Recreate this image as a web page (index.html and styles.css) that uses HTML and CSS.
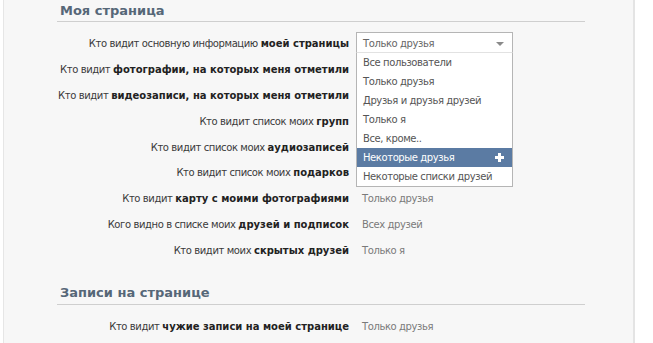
FILE: index.html
```html
<!DOCTYPE html>
<html lang="ru">
<head>
<meta charset="utf-8">
<title>Настройки приватности</title>
<link rel="stylesheet" href="styles.css">
</head>
<body>
<div class="page">
  <section class="section">
    <h2 class="section-title">Моя страница</h2>
    <div class="rows">
      <div class="row">
        <div class="label">Кто видит основную информацию <b>моей страницы</b></div>
        <div class="value">
          <div class="select">
            <div class="select-field">Только друзья<span class="arrow"></span></div>
            <ul class="select-list">
              <li>Все пользователи</li>
              <li>Только друзья</li>
              <li>Друзья и друзья друзей</li>
              <li>Только я</li>
              <li>Все, кроме..</li>
              <li class="active">Некоторые друзья<span class="plus"></span></li>
              <li>Некоторые списки друзей</li>
            </ul>
          </div>
        </div>
      </div>
      <div class="row">
        <div class="label">Кто видит <b>фотографии, на которых меня отметили</b></div>
        <div class="value covered">Только друзья</div>
      </div>
      <div class="row">
        <div class="label">Кто видит <b>видеозаписи, на которых меня отметили</b></div>
        <div class="value covered">Только друзья</div>
      </div>
      <div class="row">
        <div class="label">Кто видит список моих <b>групп</b></div>
        <div class="value covered">Только друзья</div>
      </div>
      <div class="row">
        <div class="label">Кто видит список моих <b>аудиозаписей</b></div>
        <div class="value covered">Только друзья</div>
      </div>
      <div class="row">
        <div class="label">Кто видит список моих <b>подарков</b></div>
        <div class="value covered">Только друзья</div>
      </div>
      <div class="row">
        <div class="label">Кто видит <b>карту с моими фотографиями</b></div>
        <div class="value">Только друзья</div>
      </div>
      <div class="row">
        <div class="label">Кого видно в списке моих <b>друзей и подписок</b></div>
        <div class="value">Всех друзей</div>
      </div>
      <div class="row">
        <div class="label">Кто видит моих <b>скрытых друзей</b></div>
        <div class="value">Только я</div>
      </div>
    </div>
  </section>
  <section class="section section-second">
    <h2 class="section-title">Записи на странице</h2>
    <div class="rows">
      <div class="row">
        <div class="label">Кто видит <b>чужие записи на моей странице</b></div>
        <div class="value">Только друзья</div>
      </div>
    </div>
  </section>
</div>
</body>
</html>
```

FILE: styles.css
```css
html, body {
  margin: 0;
  padding: 0;
  background: #ffffff;
}

body {
  font-family: "DejaVu Sans", Tahoma, sans-serif;
  font-size: 10px;
  color: #333333;
  height: 343px;
  overflow: hidden;
}

.page {
  margin-left: 3px;
  width: 632px;
  height: 343px;
  box-sizing: border-box;
  background: #f7f7f7;
  border-left: 1px solid #e6e6e6;
  border-right: 2px solid #e4e4e4;
  padding: 4px 0 0 53px;
}

.section {
  width: 528px;
}

.section-second {
  margin-top: 19px;
}

.section-title {
  margin: 0;
  padding: 0 0 3px 3px;
  font-size: 13px;
  font-weight: bold;
  color: #566778;
  line-height: 14px;
  border-bottom: 1px solid #cfcfcf;
}

.section-second .section-title {
  padding-bottom: 4px;
}

.rows {
  padding-top: 12px;
}

.row {
  display: grid;
  grid-template-columns: 292px 1fr;
  column-gap: 13px;
  height: 25.9px;
  align-items: start;
  line-height: 20px;
}

.label {
  text-align: right;
  white-space: nowrap;
  color: #3a3a3a;
  letter-spacing: -0.4px;
}

.label b {
  color: #222222;
  letter-spacing: 0;
}

.value {
  color: #7a7a7a;
  white-space: nowrap;
  letter-spacing: -0.4px;
}

.value.covered {
  visibility: hidden;
}

.select {
  position: relative;
  margin-left: -6px;
  margin-top: -2px;
  width: 157px;
  z-index: 2;
  visibility: visible;
}

.select-field {
  position: relative;
  height: 20px;
  line-height: 21px;
  padding-left: 6px;
  box-sizing: border-box;
  background: #ffffff;
  border: 1px solid #b5b5b5;
  border-bottom: none;
  color: #666666;
}

.arrow {
  position: absolute;
  right: 8px;
  top: 9px;
  width: 0;
  height: 0;
  border-left: 4px solid transparent;
  border-right: 4px solid transparent;
  border-top: 4px solid #8a8a8a;
}

.select-list {
  margin: 0;
  padding: 0;
  list-style: none;
  background: #ffffff;
  border: 1px solid #b5b5b5;
  border-top: 1px solid #e2e2e2;
}

.select-list li {
  position: relative;
  height: 19px;
  line-height: 19px;
  padding-left: 6px;
  color: #555555;
}

.select-list li.active {
  background: #5b7ba3;
  color: #ffffff;
}

.plus {
  position: absolute;
  right: 8px;
  top: 5px;
  width: 9px;
  height: 9px;
}

.plus::before,
.plus::after {
  content: "";
  position: absolute;
  background: #ffffff;
}

.plus::before {
  left: 3px;
  top: 0;
  width: 3px;
  height: 9px;
}

.plus::after {
  left: 0;
  top: 3px;
  width: 9px;
  height: 3px;
}
```
